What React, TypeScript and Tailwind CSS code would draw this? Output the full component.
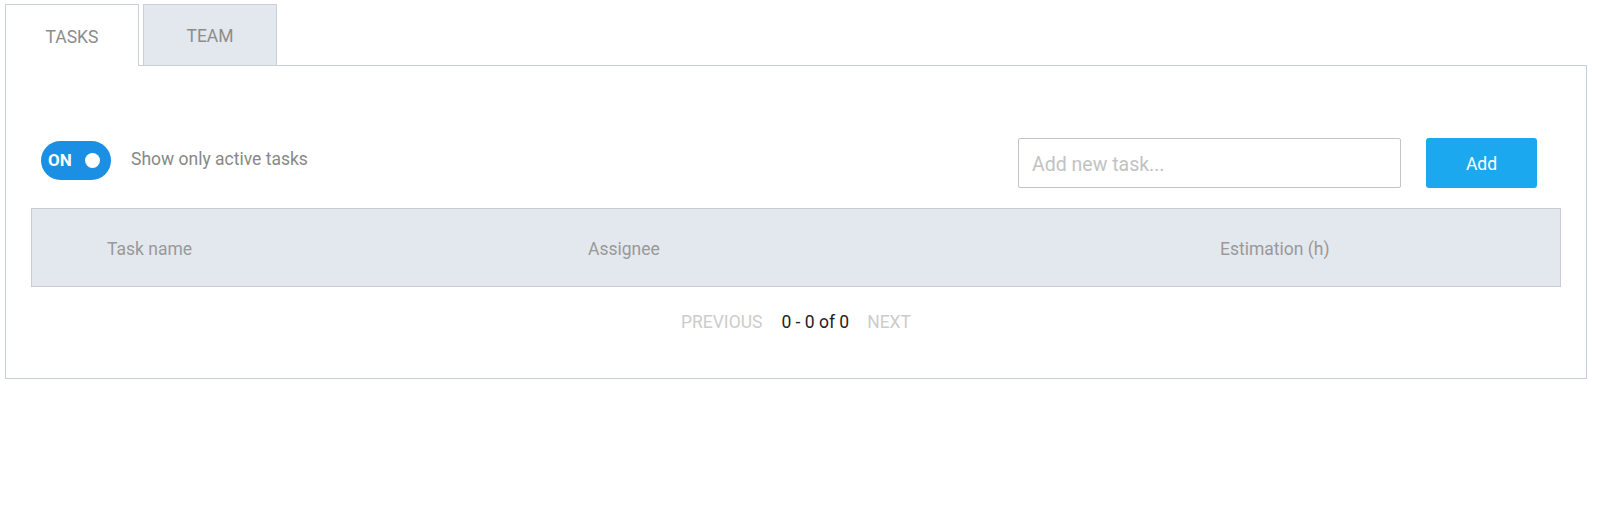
export default function App() {
  const font = { fontFamily: "Roboto, 'Liberation Sans', sans-serif" };

  return (
    <div className="min-h-[532px] bg-white pl-[5px] pt-[4px]" style={font}>
      <div className="w-[1582px]">
        {/* Tabs */}
        <div className="flex items-end gap-[4px]">
          <div className="relative z-10 -mb-px flex h-[62px] w-[134px] items-center justify-center border border-b-0 border-[#c9cfd6] bg-white pt-[3px] text-[17.5px] text-[#8c8c8c]">
            TASKS
          </div>
          <div className="flex h-[61px] w-[134px] items-center justify-center border border-b-0 border-[#c9cfd6] bg-[#e3e8ee] pt-[3px] text-[17.5px] text-[#8c8c8c]">
            TEAM
          </div>
        </div>

        {/* Panel */}
        <div className="h-[314px] border border-[#c9cfd6] bg-white px-[25px] pt-[72px]">
          <div className="flex items-start justify-between pl-[10px] pr-[24px]">
            <div className="mt-[3px] flex items-center gap-[20px]">
              <button className="flex h-[39px] w-[70px] items-center justify-between rounded-full bg-[#1b8fe3] pl-[7px] pr-[11px] text-[17px] font-bold text-white">
                <span>ON</span>
                <span className="h-[15px] w-[15px] rounded-full bg-white" />
              </button>
              <span className="-mt-[3px] text-[17.5px] text-[#888888]">Show only active tasks</span>
            </div>
            <div className="flex items-center gap-[25px]">
              <input
                placeholder="Add new task..."
                className="h-[50px] w-[383px] rounded-[2px] border border-[#c4c4c4] px-[13px] pt-[2px] text-[19.5px] text-[#333] outline-none placeholder:text-[#c2c2c2]"
              />
              <button className="h-[50px] w-[111px] rounded-[3px] bg-[#1ca8ef] pt-[3px] text-[17.5px] text-white">
                Add
              </button>
            </div>
          </div>

          {/* Table header */}
          <div className="mt-[20px] flex h-[79px] items-center border border-[#c9cdd3] bg-[#e3e8ee] pl-[75px] pt-[3px] text-[17.5px] text-[#999999]">
            <div className="w-[481px]">Task name</div>
            <div className="w-[632px]">Assignee</div>
            <div>Estimation (h)</div>
          </div>

          {/* Pagination */}
          <div className="mt-[22px] flex items-center justify-center text-[17.5px]">
            <span className="text-[#cccccc]">PREVIOUS</span>
            <span className="ml-[19px] text-[#222222]">0 - 0 of 0</span>
            <span className="ml-[18px] text-[#cccccc]">NEXT</span>
          </div>
        </div>
      </div>
    </div>
  );
}
